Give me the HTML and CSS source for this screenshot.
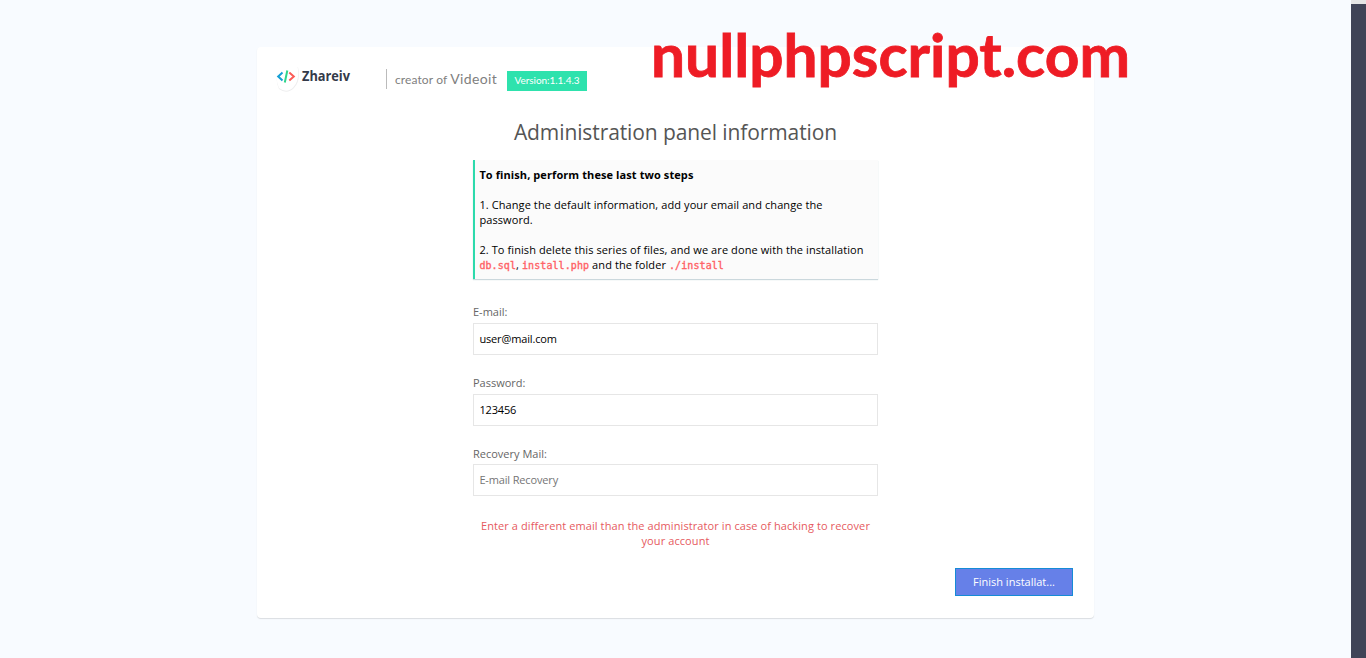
FILE: index.html
```html
<!DOCTYPE html>
<html lang="en">
<head>
<meta charset="utf-8">
<title>Administration panel information</title>
<link rel="stylesheet" href="styles.css">
</head>
<body>
<div class="page">
  <main class="card">
    <header class="header">
      <svg class="logo" width="85" height="32" viewBox="0 0 85 32" role="img" aria-label="Zhareiv">
        <path class="logo-shield-shade" d="M4 6Q15 3 22 5Q25 19 18 26Q11 33 3 27Q-2 17 4 6Z"/>
        <path class="logo-shield" d="M4 5Q15 2 21.500 4Q24 18 17.500 25Q11 32 3 26Q-2 16 4 5Z"/>
        <path class="logo-left" d="M6.500 10.500L2.200 14.500L6.500 18.500"/>
        <path class="logo-slash" d="M11.300 8.500L8.800 20.500"/>
        <path class="logo-right" d="M13.300 10.500L17.800 14.500L13.300 18.500"/>
        <text class="logo-name" x="26" y="19" textLength="48" lengthAdjust="spacingAndGlyphs">Zhareiv</text>
      </svg>
      <p class="creator"><span class="creator-of">creator of</span><span class="product">Videoit</span></p>
      <span class="version">Version:1.1.4.3</span>
    </header>
    <h1 class="title">Administration panel information</h1>
    <form class="form">
      <section class="notice">
        <strong>To finish, perform these last two steps</strong><br><br>
        1. Change the default information, add your email and change the<br>password.<br><br>
        2. To finish delete this series of files, and we are done with the installation<br>
        <code>db.sql</code>, <code>install.php</code> and the folder <code>./install</code>
      </section>
      <label class="field"><span>E-mail:</span><input type="text" value="user@mail.com"></label>
      <label class="field"><span>Password:</span><input type="text" value="123456"></label>
      <label class="field last"><span>Recovery Mail:</span><input type="text" placeholder="E-mail Recovery"></label>
      <p class="warning">Enter a different email than the administrator in case of hacking to recover<br>your account</p>
    </form>
    <div class="actions"><button class="finish" type="button">Finish installat...</button></div>
  </main>
</div>
<div class="scrollbar"></div>
<svg class="watermark" width="490" height="80" viewBox="0 0 490 80">
  <text x="0" y="51" textLength="479" lengthAdjust="spacingAndGlyphs">nullphpscript.com</text>
</svg>
</body>
</html>
```
FILE: styles.css
```css
* { box-sizing: border-box; }
body {
  margin: 0;
  height: 658px;
  overflow: hidden;
  display: flex;
  background: #f8fbff;
  font: 11px/15px "Open Sans", sans-serif;
  color: #000;
}
.page { width: 1351px; padding-top: 47px; }
.card {
  width: 837px;
  height: 571px;
  margin: 0 auto;
  background: #fff;
  border-radius: 4px;
  box-shadow: 0 1px 1px rgba(0, 0, 0, .12);
}
.header { display: flex; height: 63px; padding: 15px 19px 0; }
.logo { flex: none; margin-right: 25px; }
.logo-shield { fill: #fff; }
.logo-shield-shade { fill: #eeeeef; }
.logo-left, .logo-slash, .logo-right { fill: none; stroke-width: 2; }
.logo-left { stroke: #159fd5; }
.logo-slash { stroke: #30d58b; }
.logo-right { stroke: #fb5c57; }
.logo-name { font: 700 13.5px "Open Sans", sans-serif; fill: #343a49; }
.creator {
  display: flex;
  align-items: baseline;
  height: 20px;
  margin: 7px 11px 0 0;
  padding-left: 8px;
  border-left: 1px solid #bbb;
  font: 12px/20px Lato, sans-serif;
  color: #808080;
  width: 110px;
}
.creator-of { letter-spacing: .1px; margin-right: 3px; white-space: nowrap; }
.product { font-size: 14px; letter-spacing: .35px; }
.version {
  width: 80px;
  height: 20px;
  margin-top: 9px;
  background: #2ee2ad;
  color: #fff;
  font: 10px/19px Lato, sans-serif;
  letter-spacing: -.05px;
  text-align: center;
}
.title {
  height: 50px;
  margin: 0;
  font-size: 21px;
  line-height: 44px;
  font-weight: 400;
  letter-spacing: -.1px;
  color: #555;
  text-align: center;
}
.form { width: 405px; margin: 0 auto; }
.notice {
  width: 405px;
  height: 119px;
  margin-bottom: 25px;
  padding: 7px 0 0 4.4px;
  border-left: 2px solid #2ddaac;
  background: #fbfbfb;
  box-shadow: 0 1px 1px #cbd8dd;
  letter-spacing: .09px;
  white-space: nowrap;
}
.notice code {
  font: 400 10px/15px "DejaVu Sans Mono", monospace;
  -webkit-text-stroke: .35px #ff6165;
  color: #ff6165;
}
.field { display: block; height: 71px; color: #666; }
.field span { display: block; height: 19px; }
.field input {
  display: block;
  width: 100%;
  height: 32px;
  padding: 0 5.4px 2px;
  border: 1px solid #e6e6e6;
  background: #fff;
  color: #000;
  font: inherit;
  letter-spacing: -.15px;
}
.field input::placeholder { color: #757575; opacity: 1; }
.field.last span { height: 18px; }
.warning {
  margin: 0;
  padding-top: 1px;
  color: #e65a60;
  letter-spacing: .09px;
  text-align: center;
  white-space: nowrap;
}
.actions { display: flex; justify-content: flex-end; padding: 20px 21px 0 0; }
.finish {
  width: 118px;
  height: 28px;
  padding: 0 0 1px;
  border: 1px solid #168bd6;
  background: #6680e8;
  color: #fff;
  font: inherit;
}
.scrollbar { width: 15px; height: 658px; background: #404457; border-top: 4px solid #e5e5e5; }
.watermark { position: absolute; left: 651px; top: 26px; overflow: visible; }
.watermark text {
  font: 700 59px Lato, sans-serif;
  fill: #ee1c25;
  stroke: #ee1c25;
  stroke-width: .8px;
}
```
